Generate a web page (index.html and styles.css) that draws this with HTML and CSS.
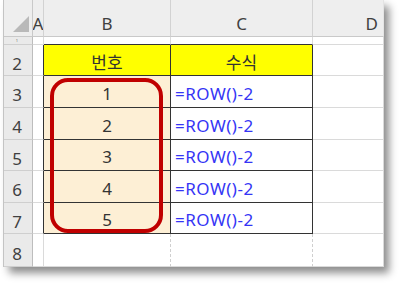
FILE: index.html
```html
<!DOCTYPE html>
<html lang="ko">
<head>
<meta charset="utf-8">
<title>ROW()-2</title>
<link rel="stylesheet" href="styles.css">
</head>
<body>
<div class="sheet">
  <div class="cell corner"><svg class="tri" width="16" height="16" viewBox="0 0 16 16"><polygon points="16,0 16,16 0,16" fill="#b9b9b9"/></svg></div>
  <div class="cell hd">A</div>
  <div class="cell hd">B</div>
  <div class="cell hd">C</div>
  <div class="cell hd hd-last">D</div>

  <div class="cell rh rh-tiny">1</div>
  <div class="cell"></div>
  <div class="cell edge-b"></div>
  <div class="cell edge-b"></div>
  <div class="cell"></div>

  <div class="cell rh">2</div>
  <div class="cell edge-r"></div>
  <div class="cell t y">번호</div>
  <div class="cell t y">수식</div>
  <div class="cell"></div>

  <div class="cell rh">3</div>
  <div class="cell edge-r"></div>
  <div class="cell t p">1</div>
  <div class="cell t f">=ROW()-2</div>
  <div class="cell"></div>

  <div class="cell rh">4</div>
  <div class="cell edge-r"></div>
  <div class="cell t p">2</div>
  <div class="cell t f">=ROW()-2</div>
  <div class="cell"></div>

  <div class="cell rh">5</div>
  <div class="cell edge-r"></div>
  <div class="cell t p">3</div>
  <div class="cell t f">=ROW()-2</div>
  <div class="cell"></div>

  <div class="cell rh">6</div>
  <div class="cell edge-r"></div>
  <div class="cell t p">4</div>
  <div class="cell t f">=ROW()-2</div>
  <div class="cell"></div>

  <div class="cell rh">7</div>
  <div class="cell edge-r"></div>
  <div class="cell t p">5</div>
  <div class="cell t f">=ROW()-2</div>
  <div class="cell"></div>

  <div class="cell rh">8</div>
  <div class="cell"></div>
  <div class="cell dash-r"></div>
  <div class="cell dash-r"></div>
  <div class="cell"></div>

  <div class="highlight"></div>
</div>
</body>
</html>
```

FILE: styles.css
```css
* { box-sizing: border-box; }

html, body {
  margin: 0;
  padding: 0;
  background: #ffffff;
}

body {
  width: 400px;
  height: 284px;
  overflow: hidden;
  font-family: "Noto Sans", "Noto Sans CJK KR", sans-serif;
}

.sheet {
  position: relative;
  margin-left: 3px;
  width: 380px;
  height: 267px;
  display: grid;
  grid-template-columns: 29px 11px 127px 142px 71px;
  grid-template-rows: 37px 8px 31px 32px 32px 31px 32px 31px 33px;
  background: #ffffff;
  border-left: 1px solid #c4c4c4;
  box-shadow: 6px 6px 8px rgba(0, 0, 0, 0.45);
  overflow: visible;
}

.cell {
  border-right: 1px solid #dadada;
  border-bottom: 1px solid #dadada;
  display: flex;
  align-items: center;
  justify-content: center;
  font-size: 17px;
  color: #333333;
  padding-top: 3px;
  line-height: 1;
  white-space: nowrap;
  overflow: hidden;
}

.corner {
  background: #eeeeee;
  border-right: 1px solid #c9c9c9;
  border-bottom: 1px solid #c9c9c9;
  align-items: flex-end;
  justify-content: flex-end;
  padding: 0 3px 4px 0;
}

.tri { display: block; }

.hd {
  background: #eeeeee;
  color: #404040;
  border-right: 1px solid #d2d2d2;
  border-bottom: 1px solid #c9c9c9;
  padding-top: 10px;
}

.hd-last {
  border-right: 1px solid #e4e4e4;
  justify-content: flex-end;
  padding-right: 5px;
}

.rh {
  background: #eaeaea;
  color: #404040;
  border-right: 1px solid #bdbdbd;
  border-bottom: 1px solid #cfcfcf;
  padding-top: 6px;
  padding-right: 2px;
}

.rh-tiny {
  font-size: 4px;
  padding-top: 0;
  color: #666666;
}

.edge-r { border-right: 1px solid #333333; }
.edge-b { border-bottom: 1px solid #333333; }

.dash-r { border-right: 1px dashed #cfcfcf; }

.t {
  border-right: 1px solid #333333;
  border-bottom: 1px solid #333333;
}

.y {
  background: #ffff00;
  color: #333333;
  font-family: "Noto Sans CJK KR", sans-serif;
  font-size: 17px;
  padding-top: 2px;
}

.p {
  background: #fdefd5;
  color: #333333;
}

.f {
  justify-content: flex-start;
  color: #3535f5;
  padding-left: 4px;
  letter-spacing: 0.5px;
}

.highlight {
  position: absolute;
  left: 46px;
  top: 78px;
  width: 113px;
  height: 155px;
  border: 4px solid #c00000;
  border-radius: 18px;
  pointer-events: none;
}
```
